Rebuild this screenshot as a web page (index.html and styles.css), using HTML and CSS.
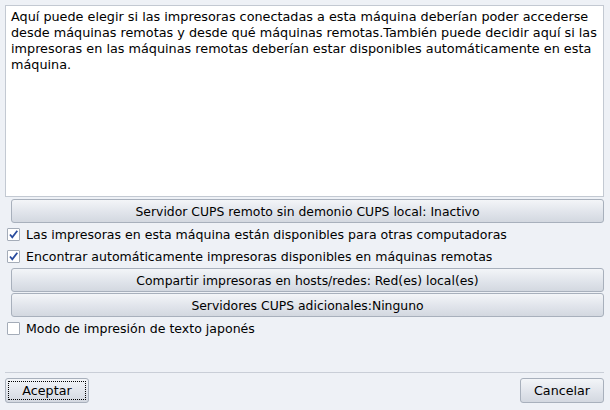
FILE: index.html
```html
<!DOCTYPE html>
<html lang="es">
<head>
<meta charset="utf-8">
<link rel="stylesheet" href="styles.css">
</head>
<body>
<div class="dialog">
  <div class="main">
    <div class="info">Aquí puede elegir si las impresoras conectadas a esta máquina deberían poder accederse desde máquinas remotas y desde qué máquinas remotas.También puede decidir aquí si las impresoras en las máquinas remotas deberían estar disponibles automáticamente en esta máquina.</div>
    <div class="btn wide first">Servidor CUPS remoto sin demonio CUPS local: Inactivo</div>
    <label class="check">
      <span class="box"><svg width="11" height="11" viewBox="0 0 11 11"><path d="M2 5.5 L4.3 8.3 L9.3 1.8" fill="none" stroke="#2a4c9e" stroke-width="1.8" stroke-linejoin="miter"/></svg></span>
      <span>Las impresoras en esta máquina están disponibles para otras computadoras</span>
    </label>
    <label class="check">
      <span class="box"><svg width="11" height="11" viewBox="0 0 11 11"><path d="M2 5.5 L4.3 8.3 L9.3 1.8" fill="none" stroke="#2a4c9e" stroke-width="1.8" stroke-linejoin="miter"/></svg></span>
      <span>Encontrar automáticamente impresoras disponibles en máquinas remotas</span>
    </label>
    <div class="btn wide">Compartir impresoras en hosts/redes: Red(es) local(es)</div>
    <div class="btn wide">Servidores CUPS adicionales:Ninguno</div>
    <label class="check">
      <span class="box"></span>
      <span>Modo de impresión de texto japonés</span>
    </label>
  </div>
  <div class="footer">
    <div class="btn small focus"><span class="focusrect">Aceptar</span></div>
    <div class="btn small">Cancelar</div>
  </div>
</div>
</body>
</html>
```
FILE: styles.css
```css
html, body {
  margin: 0;
  padding: 0;
}
body {
  width: 610px;
  height: 410px;
  background: #eef1f6;
  font-family: "DejaVu Sans", sans-serif;
  font-size: 12px;
  color: #000;
  overflow: hidden;
}
.dialog {
  height: 410px;
  display: flex;
  flex-direction: column;
  box-sizing: border-box;
  padding: 5px 6px 0 5px;
}
.main {
  display: flex;
  flex-direction: column;
  flex: 1;
}
.info {
  height: 192px;
  box-sizing: border-box;
  background: #fff;
  border: 1px solid #c3c9d2;
  padding: 3px 5px;
  line-height: 16px;
  font-size: 12.8px;
}
.btn {
  box-sizing: border-box;
  border: 1px solid #a8b0bc;
  border-radius: 3px;
  background: linear-gradient(#f3f5f8, #dfe3ea 60%, #d3d8e0);
  display: flex;
  align-items: center;
  justify-content: center;
  white-space: nowrap;
  font-size: 12.4px;
}
.wide {
  height: 24px;
  margin-left: 6px;
  margin-top: 1px;
}
.wide.first {
  margin-top: 2px;
}
.check {
  display: flex;
  align-items: center;
  height: 22px;
  padding-left: 2px;
  gap: 6px;
  font-size: 12.55px;
}
.check + .btn {
  margin-top: 1px;
}
.box {
  width: 11px;
  height: 11px;
  border: 1px solid #a4acb8;
  border-radius: 1px;
  background: #fff;
  display: flex;
  flex: none;
}
.footer {
  border-top: 1px solid #c9ced7;
  display: flex;
  justify-content: space-between;
  align-items: flex-start;
  height: 38px;
  box-sizing: border-box;
  padding-top: 5px;
}
.small {
  width: 84px;
  height: 25px;
  font-size: 12.7px;
}
.focusrect {
  box-sizing: border-box;
  width: 78px;
  height: 19px;
  border: 1px dotted #000;
  display: flex;
  align-items: center;
  justify-content: center;
}
```
